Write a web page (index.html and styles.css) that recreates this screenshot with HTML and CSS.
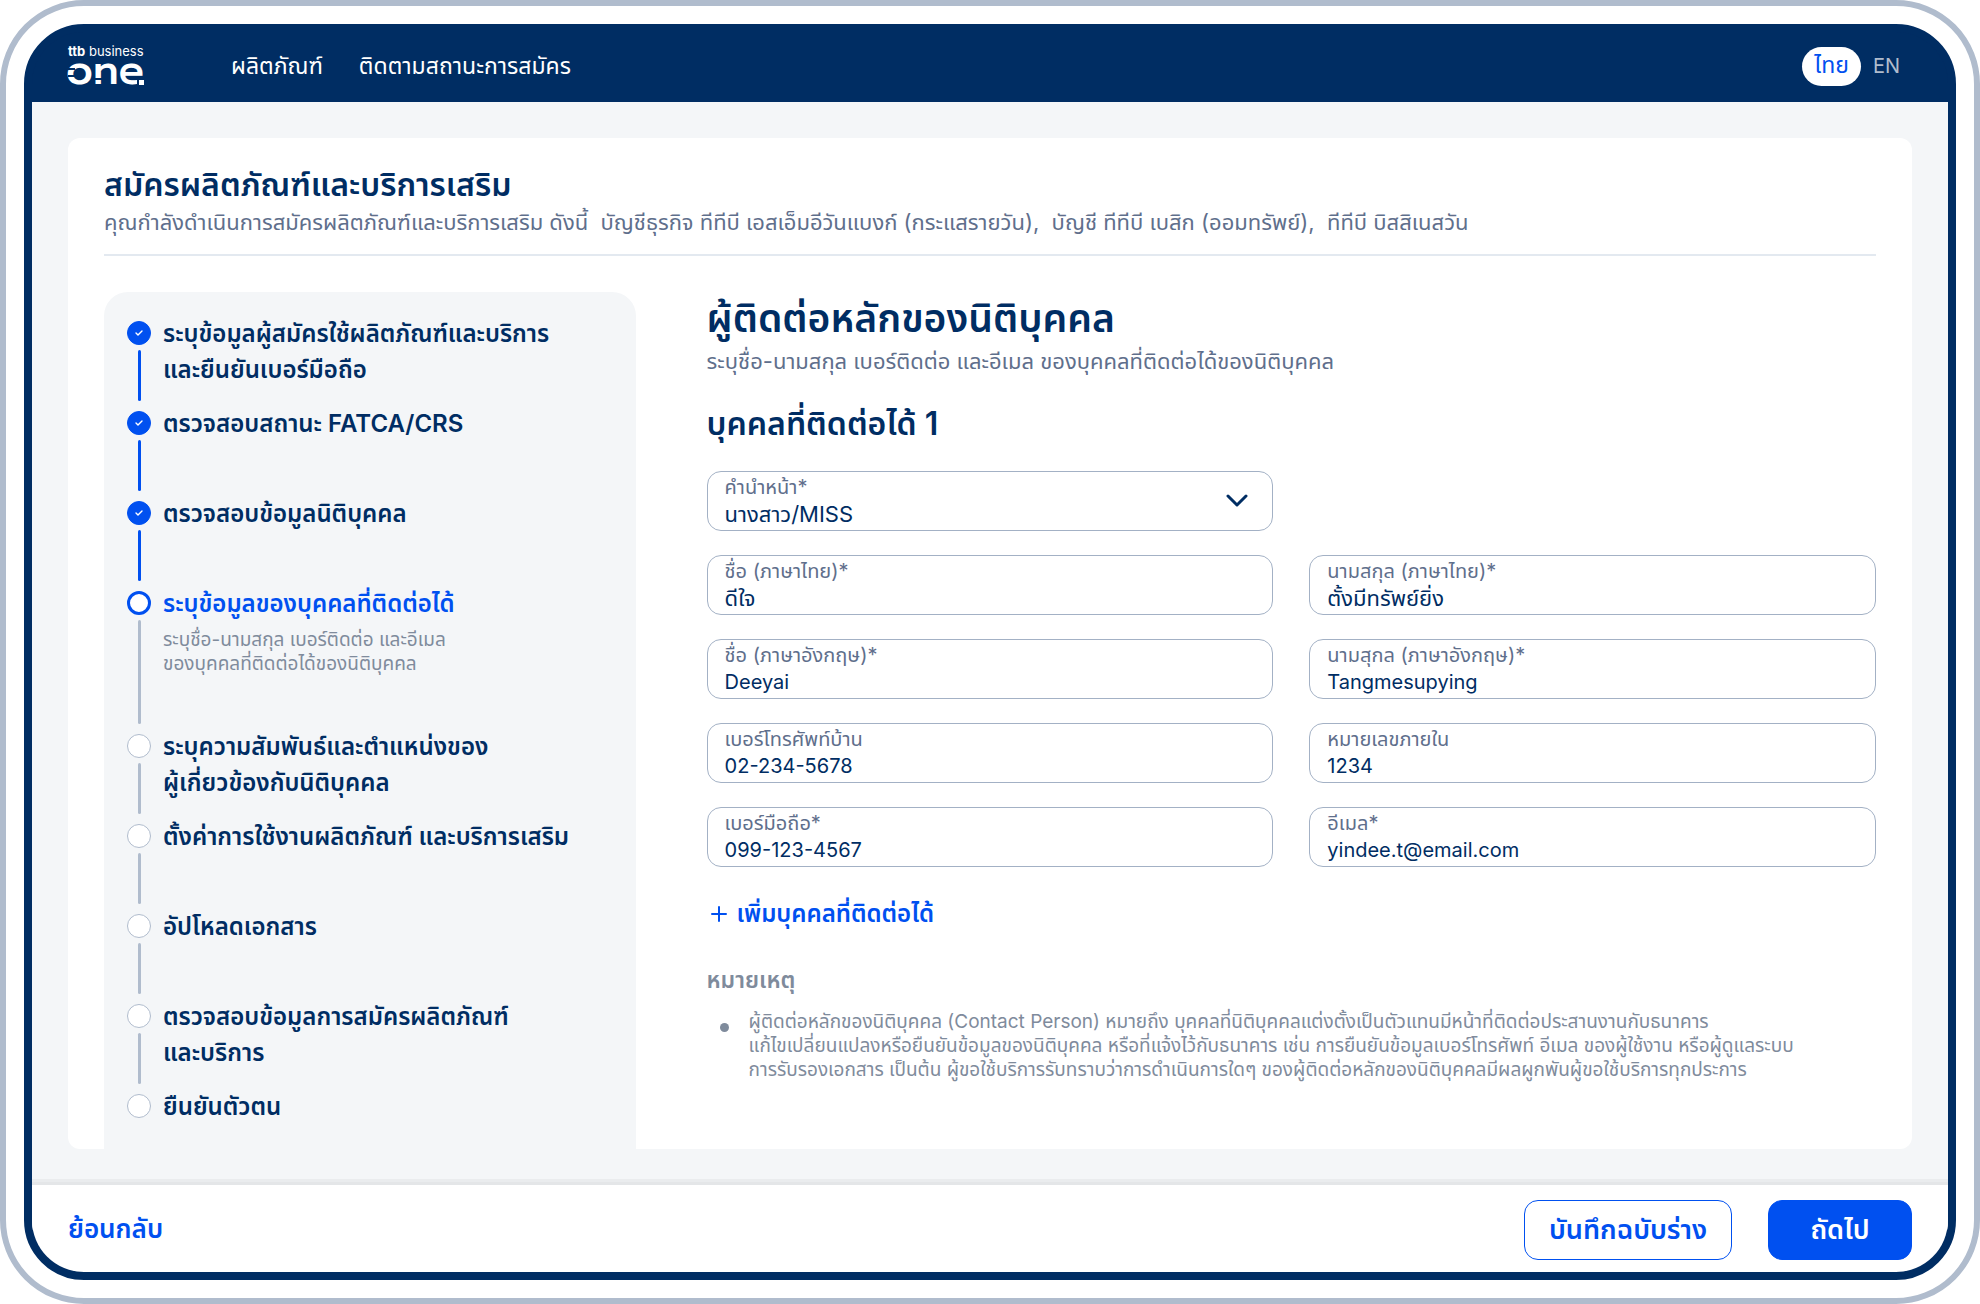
FILE: index.html
```html
<!DOCTYPE html>
<html lang="th">
<head>
<meta charset="utf-8">
<meta name="viewport" content="width=device-width, initial-scale=1">
<title>ttb business one</title>
<link rel="stylesheet" href="styles.css">
</head>
<body>
<div class="device">
  <div class="screen">
    <header class="topbar">
      <a class="logo" href="#" aria-label="ttb business one">
        <svg width="80" height="44" viewBox="0 0 80 44" aria-hidden="true">
          <text class="logo-small" x="0" y="12"><tspan class="logo-ttb">ttb</tspan> business</text>
          <text class="logo-big" x="-2" y="40">one</text>
          <path class="logo-cut" d="M0 25h7M0 32h7M26 35h8" />
          <rect class="logo-gap" x="69" y="34" width="9" height="9" />
          <rect class="logo-dot" x="71" y="36" width="5" height="5" />
        </svg>
      </a>
      <nav class="nav">
        <a href="#">ผลิตภัณฑ์</a>
        <a href="#">ติดตามสถานะการสมัคร</a>
      </nav>
      <div class="lang">
        <button class="lang-btn lang-on" type="button">ไทย</button>
        <button class="lang-btn" type="button">EN</button>
      </div>
    </header>

    <main class="main">
      <section class="card">
        <div class="card-head">
          <h1 class="card-title">สมัครผลิตภัณฑ์และบริการเสริม</h1>
          <p class="card-sub">คุณกำลังดำเนินการสมัครผลิตภัณฑ์และบริการเสริม ดังนี้ &nbsp;บัญชีธุรกิจ ทีทีบี เอสเอ็มอีวันแบงก์ (กระแสรายวัน), &nbsp;บัญชี ทีทีบี เบสิก (ออมทรัพย์), &nbsp;ทีทีบี บิสสิเนสวัน</p>
        </div>
        <div class="columns">
          <aside class="sidebar">
            <ol class="steps">
              <li class="step done"><span class="rail"><span class="dot"><svg width="8" height="6" viewBox="0 0 8 6"><path d="M1 3l2 2 4-4" /></svg></span></span>
                <div class="step-text">ระบุข้อมูลผู้สมัครใช้ผลิตภัณฑ์และบริการ<br>และยืนยันเบอร์มือถือ</div></li>
              <li class="step done"><span class="rail"><span class="dot"><svg width="8" height="6" viewBox="0 0 8 6"><path d="M1 3l2 2 4-4" /></svg></span></span>
                <div class="step-text">ตรวจสอบสถานะ FATCA/CRS</div></li>
              <li class="step done"><span class="rail"><span class="dot"><svg width="8" height="6" viewBox="0 0 8 6"><path d="M1 3l2 2 4-4" /></svg></span></span>
                <div class="step-text">ตรวจสอบข้อมูลนิติบุคคล</div></li>
              <li class="step current" aria-current="step"><span class="rail"><span class="dot"></span></span>
                <div class="step-text">ระบุข้อมูลของบุคคลที่ติดต่อได้
                  <p class="step-desc">ระบุชื่อ-นามสกุล เบอร์ติดต่อ และอีเมล<br>ของบุคคลที่ติดต่อได้ของนิติบุคคล</p></div></li>
              <li class="step"><span class="rail"><span class="dot"></span></span>
                <div class="step-text">ระบุความสัมพันธ์และตำแหน่งของ<br>ผู้เกี่ยวข้องกับนิติบุคคล</div></li>
              <li class="step"><span class="rail"><span class="dot"></span></span>
                <div class="step-text">ตั้งค่าการใช้งานผลิตภัณฑ์ และบริการเสริม</div></li>
              <li class="step"><span class="rail"><span class="dot"></span></span>
                <div class="step-text">อัปโหลดเอกสาร</div></li>
              <li class="step"><span class="rail"><span class="dot"></span></span>
                <div class="step-text">ตรวจสอบข้อมูลการสมัครผลิตภัณฑ์<br>และบริการ</div></li>
              <li class="step"><span class="rail"><span class="dot"></span></span>
                <div class="step-text">ยืนยันตัวตน</div></li>
            </ol>
          </aside>

          <form class="content">
            <h2 class="page-title">ผู้ติดต่อหลักของนิติบุคคล</h2>
            <p class="page-sub">ระบุชื่อ-นามสกุล เบอร์ติดต่อ และอีเมล ของบุคคลที่ติดต่อได้ของนิติบุคคล</p>
            <h3 class="person-title">บุคคลที่ติดต่อได้ 1</h3>
            <div class="fields">
              <div class="field thai">
                <label for="prefix">คำนำหน้า*</label>
                <select id="prefix"><option>นางสาว/MISS</option></select>
                <svg class="chevron" width="22" height="14" viewBox="0 0 22 14" aria-hidden="true"><path d="M2 2l9 9 9-9" /></svg>
              </div>
              <div class="field thai row-start"><label for="fname-th">ชื่อ (ภาษาไทย)*</label><input id="fname-th" type="text" value="ดีใจ"></div>
              <div class="field thai"><label for="lname-th">นามสกุล (ภาษาไทย)*</label><input id="lname-th" type="text" value="ตั้งมีทรัพย์ยิ่ง"></div>
              <div class="field"><label for="fname-en">ชื่อ (ภาษาอังกฤษ)*</label><input id="fname-en" type="text" value="Deeyai"></div>
              <div class="field"><label for="lname-en">นามสุกล (ภาษาอังกฤษ)*</label><input id="lname-en" type="text" value="Tangmesupying"></div>
              <div class="field"><label for="home">เบอร์โทรศัพท์บ้าน</label><input id="home" type="tel" value="02-234-5678"></div>
              <div class="field"><label for="ext">หมายเลขภายใน</label><input id="ext" type="text" value="1234"></div>
              <div class="field"><label for="mobile">เบอร์มือถือ*</label><input id="mobile" type="tel" value="099-123-4567"></div>
              <div class="field"><label for="email">อีเมล*</label><input id="email" type="email" value="yindee.t@email.com"></div>
            </div>
            <button class="add" type="button">
              <svg width="16" height="16" viewBox="0 0 16 16" aria-hidden="true"><path d="M8 1v14M1 8h14" /></svg>
              เพิ่มบุคคลที่ติดต่อได้
            </button>
            <h4 class="note-title">หมายเหตุ</h4>
            <ul class="notes">
              <li>ผู้ติดต่อหลักของนิติบุคคล (Contact Person) หมายถึง บุคคลที่นิติบุคคลแต่งตั้งเป็นตัวแทนมีหน้าที่ติดต่อประสานงานกับธนาคาร<br>แก้ไขเปลี่ยนแปลงหรือยืนยันข้อมูลของนิติบุคคล หรือที่แจ้งไว้กับธนาคาร เช่น การยืนยันข้อมูลเบอร์โทรศัพท์ อีเมล ของผู้ใช้งาน หรือผู้ดูแลระบบ<br>การรับรองเอกสาร เป็นต้น ผู้ขอใช้บริการรับทราบว่าการดำเนินการใดๆ ของผู้ติดต่อหลักของนิติบุคคลมีผลผูกพันผู้ขอใช้บริการทุกประการ</li>
            </ul>
          </form>
        </div>
      </section>
    </main>

    <footer class="actions">
      <a class="back" href="#">ย้อนกลับ</a>
      <button class="btn btn-outline" type="button">บันทึกฉบับร่าง</button>
      <button class="btn btn-solid" type="button">ถัดไป</button>
    </footer>
  </div>
</div>
</body>
</html>
```

FILE: styles.css
```css
:root {
  --navy: #002d63;
  --blue: #0050f0;
  --slate: #5f6f8c;
  --muted: #7f8b9c;
  --line: #b0bccd;
  --pale: #f4f6f8;
}

* { box-sizing: border-box; }

body {
  margin: 0;
  background: #fff;
  color: var(--navy);
  font-family: Inter, "Noto Sans Thai", "Noto Sans", sans-serif;
  font-size: 20px;
}

h1, h2, h3, h4, p, ol, ul { margin: 0; padding: 0; font-weight: 400; }
ol, ul { list-style: none; }
a { text-decoration: none; }
button, input, select { font: inherit; color: inherit; margin: 0; }

.device {
  display: flex;
  min-height: 100vh;
  padding: 18px;
  border: 6px solid var(--line);
  border-radius: 84px;
}

.screen {
  display: flex;
  flex: 1;
  flex-direction: column;
  overflow: hidden;
  border: 8px solid var(--navy);
  border-radius: 60px;
  background: var(--navy);
}

/* Top bar */
.topbar {
  display: flex;
  align-items: center;
  height: 70px;
  padding: 0 36px 2px;
  color: #fff;
}

.logo { width: 163px; height: 44px; }
.logo svg { overflow: visible; }
.logo text { fill: #fff; }
.logo-small { font-size: 13px; }
.logo-ttb { font-weight: 700; }
.logo-big { font-family: Prompt, Inter, sans-serif; font-size: 42px; font-weight: 500; }
.logo-cut { fill: none; stroke: var(--navy); stroke-width: 2; }
.logo-gap { fill: var(--navy); }
.logo-dot { fill: #fff; }

.nav { display: flex; flex: 1; gap: 36px; }
.nav a { color: #fff; font-size: 23px; line-height: 36px; }

.lang { display: flex; align-items: center; }
.lang-btn {
  height: 39px;
  padding: 0 12px;
  border: 0;
  border-radius: 20px;
  background: none;
  color: var(--line);
  font-size: 20px;
}
.lang-on { background: #fff; color: var(--blue); font-size: 23px; }

/* Card */
.main { display: flex; flex: 1; padding: 36px; background: var(--pale); }
.card {
  display: flex;
  flex: 1;
  flex-direction: column;
  padding: 27px 36px 0;
  border-radius: 12px;
  background: #fff;
}
.card-head { padding-bottom: 16px; border-bottom: 2px solid #e3e9f0; }
.card-title { margin-bottom: 1px; font-size: 32px; font-weight: 600; line-height: 40px; }
.card-sub { color: var(--slate); font-size: 22px; line-height: 32px; }
.columns { display: flex; flex: 1; gap: 71px; margin-top: 36px; }

/* Progress steps */
.sidebar {
  flex: 0 0 30%;
  padding: 24px 23px 0;
  border-radius: 24px 24px 0 0;
  background: var(--pale);
}
.step { display: flex; gap: 12px; min-height: 90px; }
.step:last-child { min-height: 36px; }
.rail { display: flex; flex-direction: column; align-items: center; gap: 5px; padding: 5px 0; }
.rail::after { content: ""; flex: 1; width: 3px; border-radius: 2px; background: var(--line); }
.step:last-child .rail::after { display: none; }
.done .rail::after { background: var(--blue); }
.dot {
  display: flex;
  align-items: center;
  justify-content: center;
  width: 24px;
  height: 24px;
  border: 1px solid var(--line);
  border-radius: 50%;
  background: #fff;
}
.done .dot { border-color: var(--blue); background: var(--blue); }
.current .dot { border: 3px solid var(--blue); }
.dot path { fill: none; stroke: #fff; stroke-width: 1.4; stroke-linecap: round; stroke-linejoin: round; }
.step-text { font-size: 24px; font-weight: 600; line-height: 36px; white-space: nowrap; }
.current .step-text { color: var(--blue); }
.step-desc { padding: 6px 0 53px; color: var(--muted); font-size: 19px; line-height: 24px; }

/* Form */
.content { flex: 1; min-width: 0; }
.page-title { font-size: 39px; font-weight: 600; line-height: 52px; }
.page-sub { margin-top: 1px; color: var(--slate); font-size: 22px; line-height: 32px; }
.person-title { margin: 27px 0; font-size: 32px; font-weight: 600; line-height: 40px; }

.fields { display: grid; grid-template-columns: 1fr 1fr; gap: 24px 36px; }
.field {
  position: relative;
  display: flex;
  flex-direction: column;
  height: 60px;
  padding: 3px 17px 0;
  border: 1px solid #a3b1c5;
  border-radius: 14px;
}
.row-start { grid-column: 1; }
.field label { color: var(--slate); font-size: 20px; line-height: 24px; }
.field input, .field select {
  width: 100%;
  height: 30px;
  padding: 0;
  border: 0;
  outline: 0;
  background: none;
  appearance: none;
  font-size: 20px;
  line-height: 30px;
}
.field.thai input, .field.thai select { font-size: 22px; }
.chevron { position: absolute; top: 22px; right: 24px; pointer-events: none; }
.chevron path { fill: none; stroke: var(--navy); stroke-width: 3; stroke-linecap: round; stroke-linejoin: round; }

.add {
  display: flex;
  align-items: center;
  gap: 10px;
  margin-top: 29px;
  padding: 0 4px;
  border: 0;
  background: none;
  color: var(--blue);
  font-size: 24px;
  font-weight: 600;
  line-height: 36px;
}
.add path { fill: none; stroke: var(--blue); stroke-width: 2; stroke-linecap: round; }

.note-title { margin-top: 32px; color: var(--muted); font-size: 23px; font-weight: 600; line-height: 32px; }
.notes { margin-top: 14px; color: var(--muted); font-size: 19px; line-height: 24px; white-space: nowrap; }
.notes li { display: grid; grid-template-columns: 9px 1fr; column-gap: 20px; padding-left: 13px; }
.notes li::before {
  content: "";
  grid-row: 1;
  width: 9px;
  height: 9px;
  margin-top: 13px;
  border-radius: 50%;
  background: var(--muted);
}

/* Bottom bar */
.actions {
  display: flex;
  align-items: center;
  gap: 36px;
  min-height: 87px;
  padding: 2px 36px 0;
  background: #fff;
  box-shadow: 0 -3px 0 #e4e6e8, 0 -6px 0 #eaecee;
}
.back { flex: 1; color: var(--blue); font-size: 26px; font-weight: 600; }
.btn {
  height: 60px;
  padding: 2px 20px 0;
  border: 1px solid var(--blue);
  border-radius: 14px;
  font-size: 27px;
  font-weight: 600;
}
.btn-outline { min-width: 208px; background: #fff; color: var(--blue); }
.btn-solid { min-width: 144px; background: var(--blue); color: #fff; }
```
